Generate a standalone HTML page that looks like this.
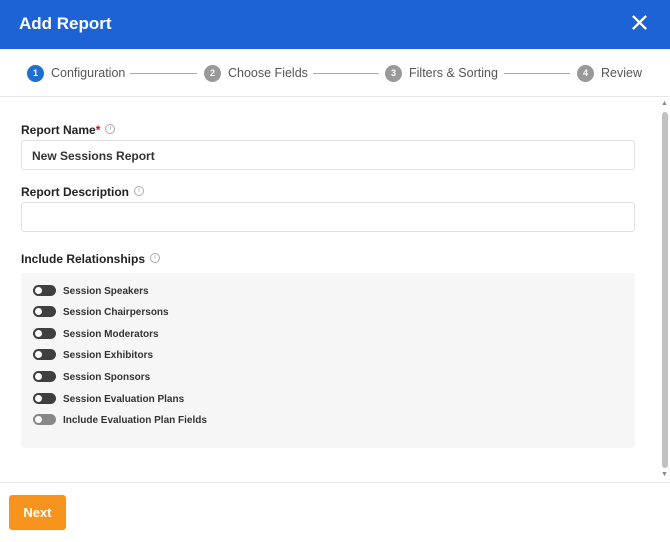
<!DOCTYPE html>
<html><head><style>
*{box-sizing:border-box;margin:0;padding:0}
body{width:670px;height:542px;background:#fff;font-family:"Liberation Sans",Arial,sans-serif;position:relative;overflow:hidden;color:#222}
.hdr{position:absolute;left:0;top:0;width:670px;height:49px;background:#1e63d6}
.hdr h1{position:absolute;left:19px;top:14px;font-size:17px;font-weight:bold;color:#fff}
.x{position:absolute;right:22px;top:14px;width:17px;height:17px}
.steps{position:absolute;top:50px;left:0;width:670px;height:47px;border-bottom:1px solid #e6e6e6}
.st{position:absolute;top:15px;font-size:12.5px;color:#555;display:flex;align-items:center;line-height:17px}
.c{width:17px;height:17px;border-radius:50%;background:#999;color:#fff;font-size:9px;font-weight:bold;display:inline-flex;align-items:center;justify-content:center;margin-right:7px}
.ln{position:absolute;top:73px;height:1px;background:#aaa}
.lbl{position:absolute;left:21px;font-size:12px;font-weight:bold;color:#222;line-height:14px}
.i{display:inline-block;width:10px;height:10px;border:1px solid #aaa;border-radius:50%;font-size:7px;color:#aaa;text-align:center;line-height:8px;font-weight:normal;margin-left:5px;position:relative;top:-2px;vertical-align:middle}
.inp{position:absolute;left:21px;width:614px;height:30px;border:1px solid #e0e0e0;border-radius:3px;font-size:12px;font-weight:bold;color:#333;padding:8px 10px}
.box{position:absolute;left:21px;top:273px;width:614px;height:175px;background:#f6f6f6;border-radius:3px}
.row{position:absolute;left:12px;height:12px;width:300px;font-size:10px;font-weight:bold;color:#333;line-height:12px}
.row b{position:absolute;left:30px;top:0px}
.tg{position:absolute;left:0;top:-1px;width:23px;height:11px;border-radius:6px;background:#3f3f3f}
.tg:after{content:"";position:absolute;left:2px;top:2px;width:7px;height:7px;border-radius:50%;background:#fff}
.tg.l{background:#888}
.sb{position:absolute;left:662px;top:112px;width:6px;height:356px;background:#c1c1c1;border-radius:3px}
.foot{position:absolute;left:0;top:482px;width:670px;border-top:1px solid #e6e6e6}
.btn{position:absolute;left:9px;top:495px;width:57px;height:35px;background:#f7941d;border-radius:3px;color:#fff;font-weight:bold;font-size:13px;text-align:center;line-height:35px}
</style></head><body>
<div class="hdr"><h1>Add Report</h1>
<svg class="x" viewBox="0 0 18 18"><path d="M2 2L16 16M16 2L2 16" stroke="#fff" stroke-width="2.4"/></svg></div>
<div class="steps">
<div class="st" style="left:27px"><span class="c" style="background:#1e6fd0">1</span>Configuration</div>
<div class="st" style="left:204px"><span class="c">2</span>Choose Fields</div>
<div class="st" style="left:385px"><span class="c">3</span>Filters &amp; Sorting</div>
<div class="st" style="left:577px"><span class="c">4</span>Review</div>
</div>
<div class="ln" style="left:130px;width:67px"></div>
<div class="ln" style="left:313px;width:66px"></div>
<div class="ln" style="left:504px;width:66px"></div>
<div style="position:absolute;left:661px;top:100px;font-size:7px;color:#888">▲</div>
<div style="position:absolute;left:661px;top:471px;font-size:7px;color:#888">▼</div>
<div class="sb"></div>
<div class="lbl" style="top:123px">Report Name<span style="color:#d00">*</span><span class="i">i</span></div>
<div class="inp" style="top:140px">New Sessions Report</div>
<div class="lbl" style="top:185px">Report Description<span class="i">i</span></div>
<div class="inp" style="top:202px"></div>
<div class="lbl" style="top:252px">Include Relationships<span class="i">i</span></div>
<div class="box">
<div class="row" style="top:13px"><span class="tg"></span><b>Session Speakers</b></div>
<div class="row" style="top:34px"><span class="tg"></span><b>Session Chairpersons</b></div>
<div class="row" style="top:56px"><span class="tg"></span><b>Session Moderators</b></div>
<div class="row" style="top:77px"><span class="tg"></span><b>Session Exhibitors</b></div>
<div class="row" style="top:99px"><span class="tg"></span><b>Session Sponsors</b></div>
<div class="row" style="top:121px"><span class="tg"></span><b>Session Evaluation Plans</b></div>
<div class="row" style="top:142px"><span class="tg l"></span><b>Include Evaluation Plan Fields</b></div>
</div>
<div class="foot"></div>
<div class="btn">Next</div>
</body></html>
